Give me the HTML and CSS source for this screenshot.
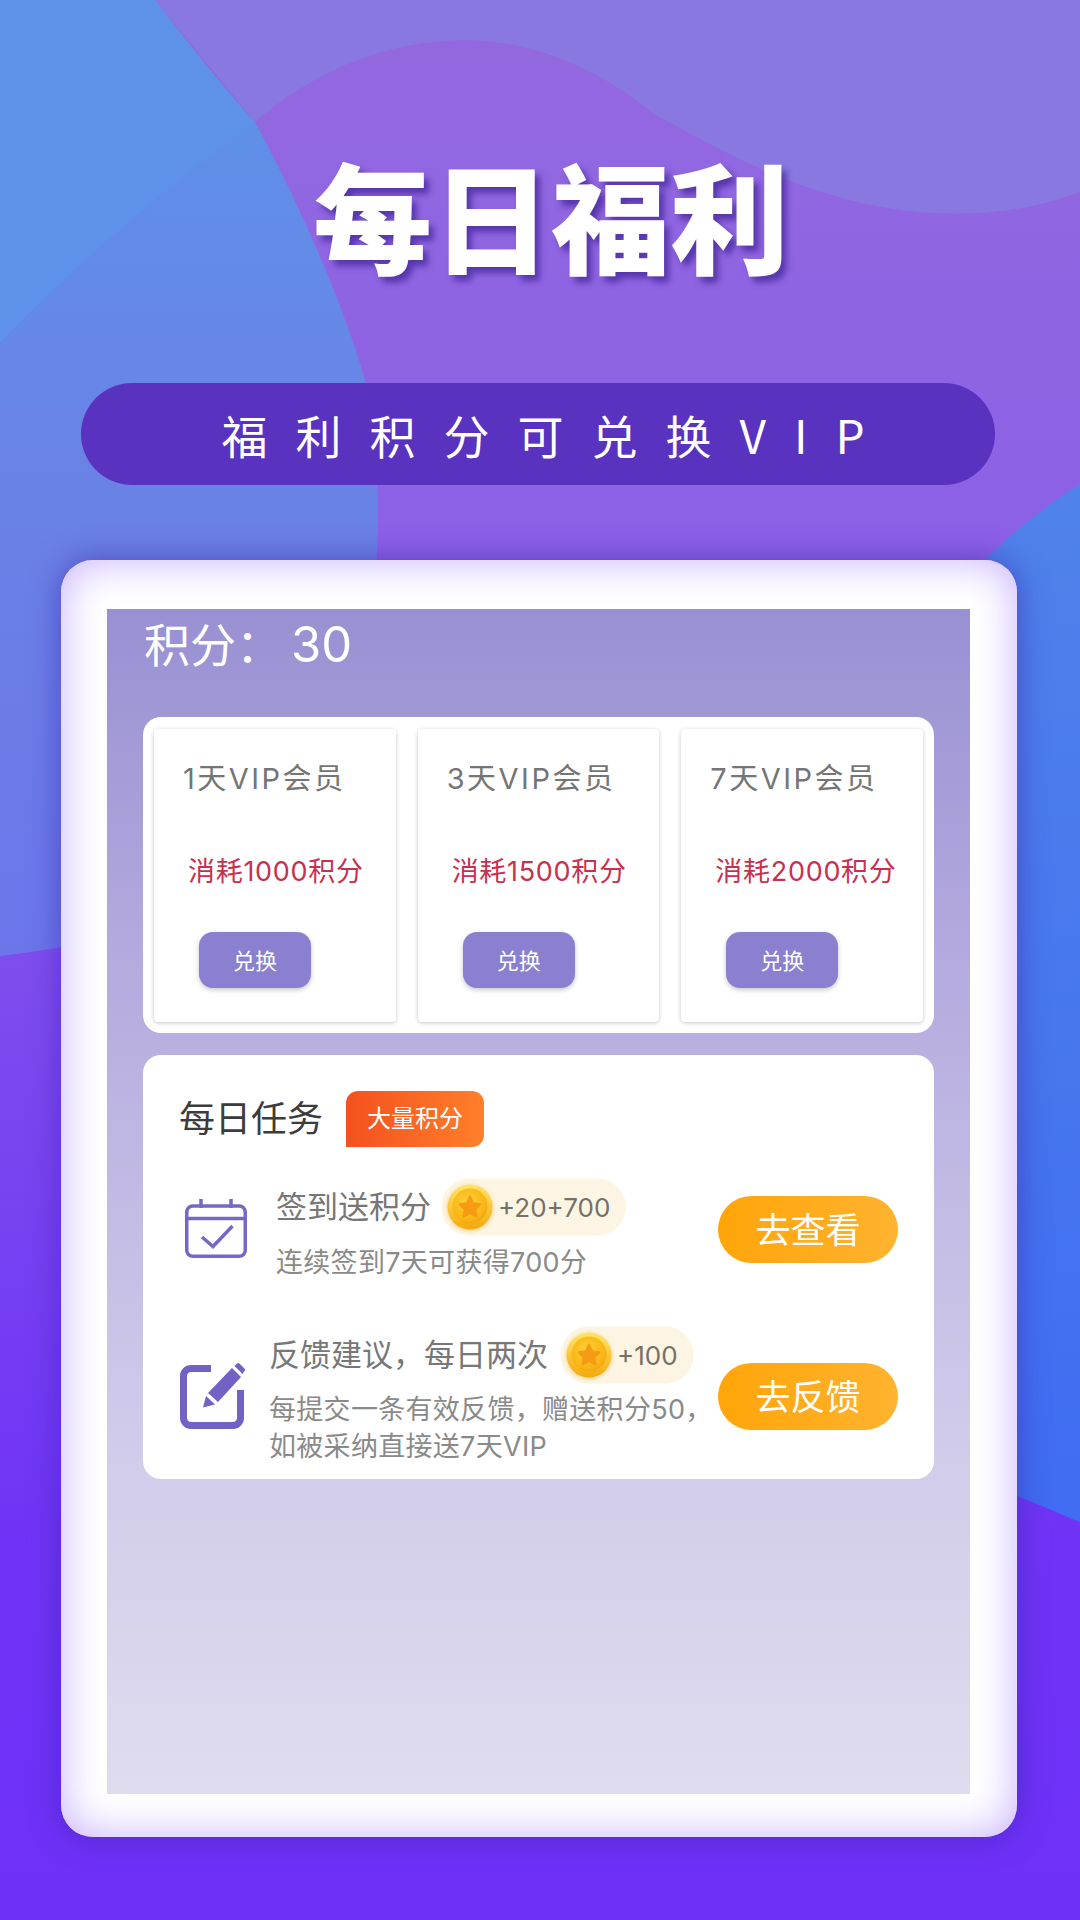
FILE: index.html
```html
<!DOCTYPE html>
<html lang="zh-CN">
<head>
<meta charset="utf-8">
<title>每日福利</title>
<link rel="stylesheet" href="styles.css">
</head>
<body>
<main class="page">
  <svg class="backdrop" viewBox="0 0 1080 1920" preserveAspectRatio="none" aria-hidden="true">
    <defs>
      <linearGradient id="base" x1="0" y1="0" x2="0" y2="1">
        <stop offset="0" stop-color="#9469df"/><stop offset=".3" stop-color="#8b60e6"/><stop offset=".55" stop-color="#7c48ef"/><stop offset=".8" stop-color="#7033f6"/><stop offset="1" stop-color="#6e30f8"/>
      </linearGradient>
      <linearGradient id="blueL" x1="0" y1="0" x2="0" y2="1">
        <stop offset="0" stop-color="#5b95e8"/><stop offset=".5" stop-color="#6a82e6"/><stop offset="1" stop-color="#6c76ea"/>
      </linearGradient>
      <linearGradient id="blueR" x1="0" y1="0" x2="0" y2="1">
        <stop offset="0" stop-color="#5082ea"/><stop offset="1" stop-color="#3f6cf2"/>
      </linearGradient>
    </defs>
    <rect width="1080" height="1920" fill="url(#base)"/>
    <path fill="#8978df" d="M155 0H1080V192C1010 218 950 216 900 210C800 196 720 150 654 114C600 70 540 42 468 40C380 40 310 75 255 122Z"/>
    <path fill="url(#blueR)" d="M1080 484C1040 510 1010 535 985 560L1000 1490C1030 1500 1060 1514 1080 1522Z"/>
    <path fill="url(#blueL)" d="M0 0H155C200 60 235 100 255 122C305 215 345 310 365 380C375 430 378 470 378 520C378 660 320 850 160 925C110 940 50 950 0 956Z"/>
    <path fill="#5e92e8" d="M0 0H155C190 45 225 90 255 122C160 190 70 270 0 343Z"/>
  </svg>

  <h1 class="title">每日福利</h1>
  <p class="slogan">福利积分可兑换VIP</p>

  <section class="frame">
    <div class="panel">
      <p class="points">积分：<span class="points-value">30</span></p>

      <div class="rewards">
        <article class="reward">
          <h2 class="reward-name">1天VIP会员</h2>
          <p class="reward-cost">消耗1000积分</p>
          <button class="redeem">兑换</button>
        </article>
        <article class="reward">
          <h2 class="reward-name">3天VIP会员</h2>
          <p class="reward-cost">消耗1500积分</p>
          <button class="redeem">兑换</button>
        </article>
        <article class="reward">
          <h2 class="reward-name">7天VIP会员</h2>
          <p class="reward-cost">消耗2000积分</p>
          <button class="redeem">兑换</button>
        </article>
      </div>

      <div class="tasks">
        <div class="tasks-head">
          <h2 class="tasks-title">每日任务</h2>
          <span class="tag">大量积分</span>
        </div>

        <div class="task task-sign">
          <svg class="task-icon" width="62" height="59" viewBox="0 0 62 59" aria-hidden="true">
            <rect x="1.750" y="7" width="58.500" height="50.250" rx="6" fill="none" stroke="#7868c6" stroke-width="3.500"/>
            <path d="M1.750 19.500H60.250M16 0V9M46 0V9" fill="none" stroke="#7868c6" stroke-width="3.500"/>
            <path d="M17 38L28 47.500L47.500 27" fill="none" stroke="#7868c6" stroke-width="3.500"/>
          </svg>
          <div class="task-body">
            <div class="task-line">
              <h3 class="task-name">签到送积分</h3>
              <span class="chip">
                <svg class="coin" width="46" height="46" viewBox="0 0 46 46" aria-hidden="true"><use href="#coin"/></svg>
                +20+700
              </span>
            </div>
            <p class="task-note">连续签到7天可获得700分</p>
          </div>
          <button class="go">去查看</button>
        </div>

        <div class="task task-feedback">
          <svg class="task-icon" width="66" height="66" viewBox="0 0 66 66" aria-hidden="true">
            <path d="M31 5.500H11A7.500 7.500 0 0 0 3.500 13V55A7.500 7.500 0 0 0 11 62.500H53A7.500 7.500 0 0 0 60.500 55V27" fill="none" stroke="#7361c6" stroke-width="7"/>
            <path d="M28 30L52 5L61 14L38 39Z" fill="#7361c6"/>
            <path d="M54.500 3L57 .5Q58 -.5 59.500 .5L64.500 5.500Q65.500 7 64.500 8L62.500 11Z" fill="#7361c6"/>
            <path d="M26 33L35 41.500L23 44.500Z" fill="#7361c6"/>
          </svg>
          <div class="task-body">
            <div class="task-line">
              <h3 class="task-name">反馈建议，每日两次</h3>
              <span class="chip">
                <svg class="coin" width="46" height="46" viewBox="0 0 46 46" aria-hidden="true">
                  <defs>
                    <radialGradient id="coinFace" cx=".45" cy=".4" r=".65"><stop offset="0" stop-color="#ffd23a"/><stop offset=".75" stop-color="#f9b514"/><stop offset="1" stop-color="#eda30c"/></radialGradient>
                    <linearGradient id="coinRim" x1="0" y1="0" x2="0" y2="1"><stop offset="0" stop-color="#ffe566"/><stop offset="1" stop-color="#f5a90c"/></linearGradient>
                    <g id="coin">
                      <circle cx="23" cy="23" r="22.500" fill="url(#coinRim)"/>
                      <circle cx="23" cy="22" r="17.500" fill="url(#coinFace)"/>
                      <path d="M23 12.500L26.200 19.200L33.500 20.200L28.300 25.300L29.600 32.500L23 29L16.400 32.500L17.700 25.300L12.500 20.200L19.800 19.200Z" fill="#f79a14" stroke="#f79a14" stroke-width="2" stroke-linejoin="round"/>
                    </g>
                  </defs>
                  <use href="#coin"/>
                </svg>
                +100
              </span>
            </div>
            <p class="task-note">每提交一条有效反馈，赠送积分50，<br>如被采纳直接送7天VIP</p>
          </div>
          <button class="go">去反馈</button>
        </div>
      </div>
    </div>
  </section>
</main>
</body>
</html>
```

FILE: styles.css
```css
* { box-sizing: border-box; }
html, body { margin: 0; padding: 0; }
body { font-family: Inter, "Noto Sans CJK SC", sans-serif; background: #6e30f8; }
h1, h2, h3, p { margin: 0; font-weight: 400; }
button { font-family: inherit; border: 0; padding: 0; color: #fff; }

.page { position: relative; width: 1080px; height: 1920px; overflow: hidden; padding-top: 140px; }
.backdrop { position: absolute; inset: 0; width: 1080px; height: 1920px; }

.title, .slogan, .frame { position: relative; }

.title {
  height: 147px; line-height: 147px; text-align: center; padding-left: 22px;
  font-family: "Noto Sans CJK SC", sans-serif; font-size: 119px; font-weight: 900; color: #fff;
  text-shadow: 5px 6px 6px rgba(62, 34, 150, .7);
}
.slogan {
  width: 914px; height: 102px; margin: 96px 0 0 81px;
  border-radius: 51px; background: #5932c0; color: #fff;
  display: flex; align-items: center; justify-content: center;
  font-family: "Noto Sans CJK SC", sans-serif; font-size: 46px; font-weight: 400; letter-spacing: 28px; padding-left: 38px;
}

.frame {
  width: 956px; height: 1277px; margin: 75px 0 0 61px; padding: 49px 47px 43px 46px;
  border-radius: 32px; background: #fff;
  box-shadow: 0 0 30px rgba(58, 36, 170, .6), inset 0 0 44px #c8b0ff;
}
.panel {
  height: 100%; padding: 0 36px;
  background: linear-gradient(180deg, #9890d2 0%, #b3a9de 28%, #d0cbea 70%, #dfdcef 100%);
}

.points { height: 108px; padding: 0 0 0 1px; color: #fff; font-size: 46px; line-height: 72px; }
.points-value { margin-left: 9px; font-size: 49px; }

.rewards {
  display: flex; gap: 22px; height: 316px; padding: 12px 11px 11px;
  border-radius: 18px; background: #fff;
}
.reward {
  width: 242px; display: flex; flex-direction: column; align-items: flex-start;
  border-radius: 4px; background: #fff; box-shadow: 0 1px 4px rgba(0, 0, 0, .22);
}
.reward-name { margin: 32px 0 0 29px; height: 36px; font-size: 29px; line-height: 36px; color: #757575; letter-spacing: 2.500px; white-space: nowrap; }
.reward-cost { margin: 59px 0 0 34px; height: 32px; font-size: 27px; line-height: 32px; color: #c9304f; letter-spacing: .7px; white-space: nowrap; }
.redeem {
  width: 112px; height: 56px; margin: 44px 0 0 45px; padding-bottom: 3px;
  border-radius: 14px; background: #8a80cf; font-size: 22px;
  box-shadow: 0 2px 5px rgba(0, 0, 0, .22);
}

.tasks { height: 424px; margin-top: 22px; padding: 36px 36px 0; border-radius: 18px; background: #fff; }
.tasks-head { display: flex; align-items: center; gap: 23px; height: 56px; }
.tasks-title { font-size: 36px; line-height: 52px; color: #3c3c3c; }
.tag {
  width: 138px; height: 56px; display: flex; align-items: center; justify-content: center;
  border-radius: 12px 12px 12px 0; background: linear-gradient(90deg, #f4511e, #ff7f2b);
  color: #fff; font-size: 24px; line-height: 52px;
}

.task { display: flex; align-items: flex-start; position: relative; }
.task-sign { margin-top: 32px; height: 104px; }
.task-feedback { margin-top: 44px; }
.task-icon { flex: none; }
.task-sign .task-icon { margin: 20px 30px 0 6px; }
.task-feedback .task-icon { margin: 36px 24px 0 1px; }
.task-sign .task-body { margin-left: -1px; }
.task-feedback .task-body { margin-left: -1px; }
.task-body { flex: 1; min-width: 0; }
.task-line { display: flex; align-items: center; height: 56px; }
.task-name { font-size: 31px; line-height: 52px; color: #777; }
.chip {
  height: 56px; display: flex; align-items: center; gap: 5px; padding: 0 15px 0 5px;
  border-radius: 28px; background: #fdf5e3; color: #76706a; font-size: 26px;
  box-shadow: 0 0 2px #f6e8c8;
}
.coin { filter: drop-shadow(0 1px 2px rgba(225, 165, 40, .55)); }
.task-sign .chip { margin-left: 11px; }
.task-feedback .chip { margin-left: 13px; }
.task-note { font-size: 27px; line-height: 37px; color: #8a8a8a; white-space: nowrap; letter-spacing: .3px; }
.task-sign .task-note { margin-top: 9px; }
.task-feedback .task-note { margin-top: 8px; }
.go {
  flex: none; width: 180px; height: 67px; font-size: 35px; line-height: 60px;
  border-radius: 34px; background: linear-gradient(90deg, #ffa509, #ffb32f);
}
.task-sign .go { margin-top: 17px; }
.task-feedback .go { margin-top: 36px; }
```
